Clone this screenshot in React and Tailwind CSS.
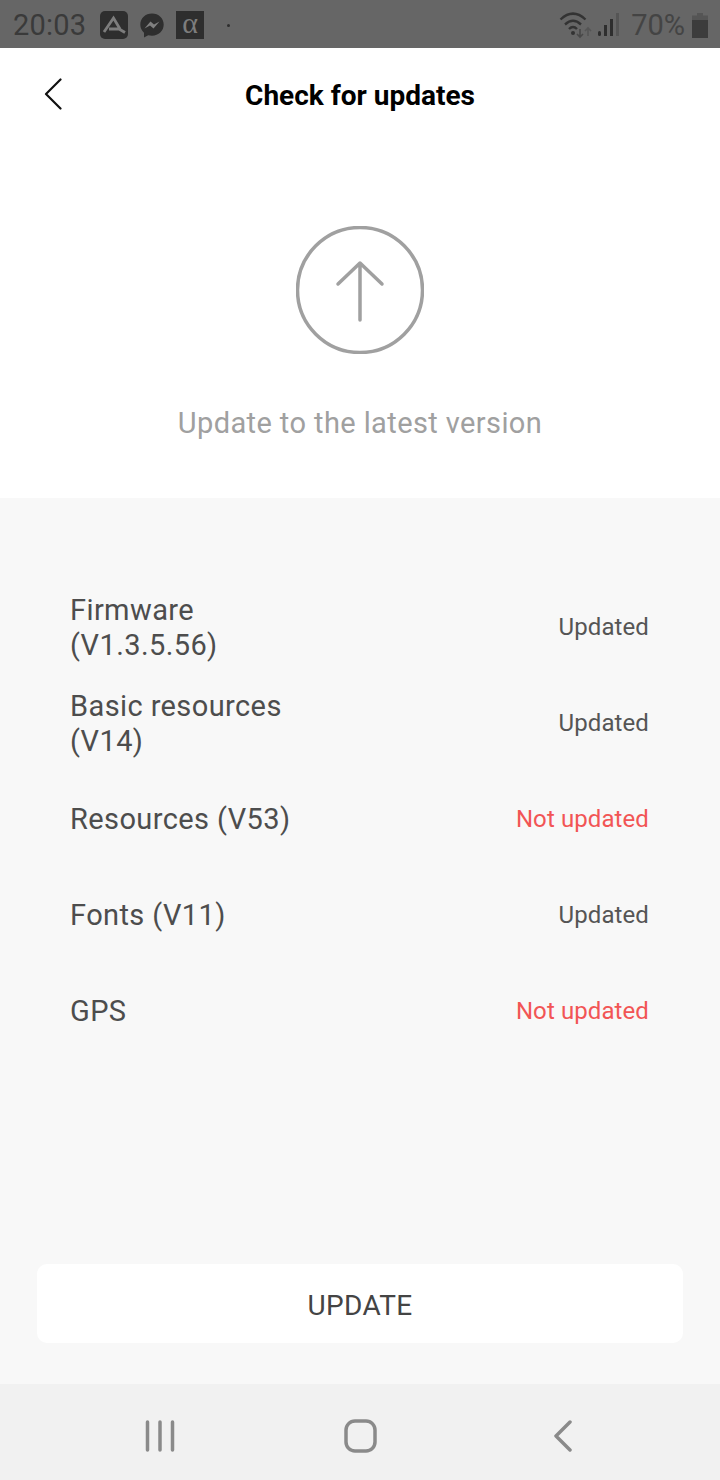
import React from 'react';

const rows = [
  { name: 'Firmware (V1.3.5.56)', status: 'Updated', wrapped: true },
  { name: 'Basic resources (V14)', status: 'Updated', wrapped: true },
  { name: 'Resources (V53)', status: 'Not updated', stale: true },
  { name: 'Fonts (V11)', status: 'Updated' },
  { name: 'GPS', status: 'Not updated', stale: true },
];

const StatusBar = () => (
  <div className="h-12 bg-[#666666] flex items-center justify-between pt-[2px] pl-[13px] pr-[12px] text-[#3a3a3a]">
    <div className="flex items-center">
      <span className="text-[29px] leading-none tracking-[0.2px]">20:03</span>
      <svg className="ml-[14px]" width="28" height="28" viewBox="0 0 28 28">
        <rect width="28" height="28" rx="5" fill="#2e2e2e" />
        <path d="M4 21 L13.5 7 L20 18 M9 18 H19 L25 21.5" fill="none" stroke="#7d7d7d" strokeWidth="2.8" />
      </svg>
      <svg className="ml-[12px]" width="24" height="25" viewBox="0 0 24 25">
        <path d="M12 0.5C5.4 0.5 0.3 5.3 0.3 11.6c0 3.3 1.4 6.1 3.7 8.1v4.8l4.2-2.3c1.2.3 2.5.5 3.8.5 6.6 0 11.7-4.8 11.7-11.1S18.6.5 12 .5z" fill="#2e2e2e" />
        <path d="M4.5 15.5l6-7 3.5 3 5.5-3-6 7-3.5-3z" fill="#808080" />
      </svg>
      <div className="ml-[12px] w-7 h-7 bg-[#2e2e2e] flex items-center justify-center text-[#7d7d7d] text-[30px] leading-none pb-1 font-['Liberation_Serif',serif]">α</div>
      <div className="ml-[23px] w-[3px] h-[3px] rounded-full bg-[#2e2e2e]" />
    </div>
    <div className="flex items-center">
      <svg width="34" height="27" viewBox="0 0 34 27" fill="none">
        <path d="M1.5 7.5C10 -0.5 18 -0.5 26.5 7.5" stroke="#333333" strokeWidth="2.4" />
        <path d="M6 12.5C11.5 7.5 16.5 7.5 22 12.5" stroke="#333333" strokeWidth="2.4" />
        <path d="M10 17C12.5 14.5 15.5 14.5 18 17" stroke="#333333" strokeWidth="2.4" />
        <circle cx="14" cy="21" r="2" fill="#333333" />
        <path d="M21 17v8M18 22l3 3 3-3" stroke="#484848" strokeWidth="1.6" />
        <path d="M29 24v-8M26 19l3-3 3 3" stroke="#555555" strokeWidth="1.6" />
      </svg>
      <div className="ml-[5px] flex items-end gap-[3px] h-[23px] mb-[2px]">
        <div className="w-[3px] h-[5px] bg-[#2e2e2e] rounded-sm" />
        <div className="w-[3px] h-[11px] bg-[#2e2e2e]" />
        <div className="w-[3px] h-[17px] bg-[#2e2e2e]" />
        <div className="w-[3px] h-[23px] bg-[#555555]" />
      </div>
      <span className="ml-[12px] text-[29px] leading-none text-[#444444]">70%</span>
      <svg className="ml-[7px]" width="16" height="25" viewBox="0 0 16 25">
        <path d="M5 0h6v2.5h5V25H0V2.5h5z" fill="#555555" />
        <rect y="7" width="16" height="18" fill="#3c3c3c" />
      </svg>
    </div>
  </div>
);

const Row = ({ name, status, stale, wrapped }) => (
  <div className="h-24 flex items-center justify-between">
    <div className={`w-[250px] text-[29px] leading-[35px] tracking-[0.4px] text-[#4d4d4d] ${wrapped ? 'pt-[2px]' : ''}`}>{name}</div>
    <div className={`text-2xl tracking-[0.1px] ${stale ? 'text-[#f25555]' : 'text-[#555555]'}`}>{status}</div>
  </div>
);

const App = () => {
  return (
    <div className="w-[720px] h-[1480px] flex flex-col bg-white font-['Roboto',sans-serif]">
      <StatusBar />

      <div className="h-[450px] bg-white flex flex-col items-center">
        <div className="w-full h-24 flex items-center justify-center relative">
          <svg className="absolute left-[44px] top-[30px]" width="18" height="32" viewBox="0 0 18 32" fill="none">
            <path d="M16.5 1.5L2 16l14.5 14.5" stroke="#111111" strokeWidth="2.2" strokeLinecap="round" strokeLinejoin="round" />
          </svg>
          <h1 className="text-[28px] font-bold text-black">Check for updates</h1>
        </div>
        <svg className="mt-[82px]" width="128" height="128" viewBox="0 0 128 128" fill="none">
          <circle cx="64" cy="64" r="62.5" stroke="#a0a0a0" strokeWidth="3.5" />
          <path d="M64 94V37M42 58l22-21 22 21" stroke="#a0a0a0" strokeWidth="3.5" strokeLinecap="round" strokeLinejoin="round" />
        </svg>
        <p className="mt-[51px] text-[29px] leading-9 tracking-[0.4px] text-[#a0a0a0]">Update to the latest version</p>
      </div>

      <div className="flex-1 bg-[#f8f8f8] flex flex-col">
        <div className="pt-[81px] pl-[70px] pr-[71px] flex-1">
          {rows.map(r => (
            <Row key={r.name} {...r} />
          ))}
        </div>
        <div className="px-[37px] pb-[41px]">
          <button className="w-full h-[79px] pt-[5px] bg-white rounded-[10px] text-[28px] tracking-[0.3px] font-normal text-[#444444]">UPDATE</button>
        </div>
      </div>

      <div className="h-24 bg-[#f1f1f1] flex items-center justify-between pt-[7px] pl-[145px] pr-[148px]">
        <svg width="30" height="32" viewBox="0 0 30 32" fill="none" stroke="#8a8a8a" strokeWidth="3.5" strokeLinecap="round">
          <path d="M2.5 2v28M15 2v28M27.5 2v28" />
        </svg>
        <svg className="-ml-[7px]" width="33" height="34" viewBox="0 0 33 34" fill="none">
          <rect x="2" y="2" width="29" height="30" rx="9" stroke="#8a8a8a" strokeWidth="3.5" />
        </svg>
        <svg width="19" height="32" viewBox="0 0 19 32" fill="none" stroke="#8a8a8a" strokeWidth="3.5" strokeLinecap="round" strokeLinejoin="round">
          <path d="M17 2L3 16l14 14" />
        </svg>
      </div>
    </div>
  );
};

export default App;
